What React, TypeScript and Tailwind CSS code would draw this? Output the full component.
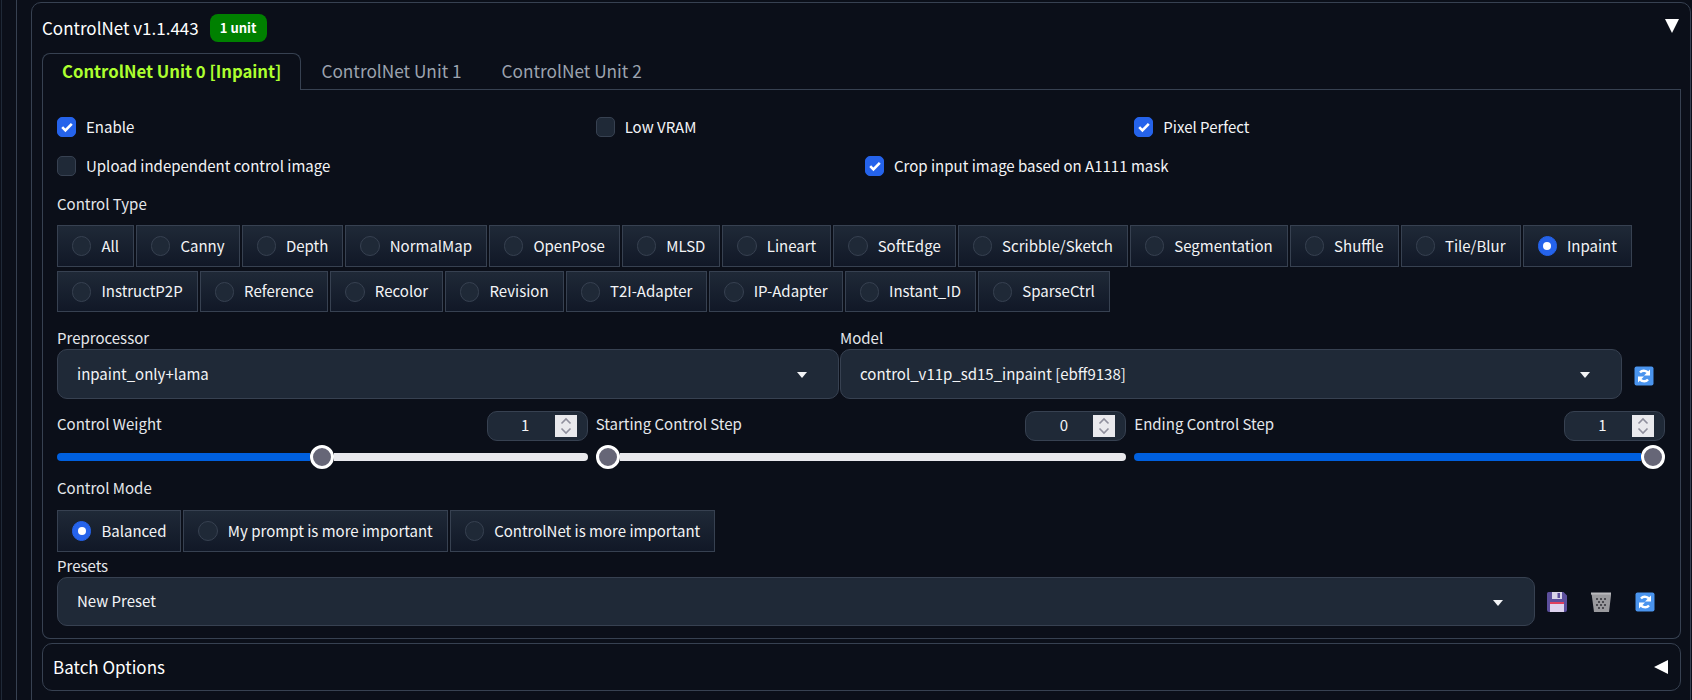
import React from 'react';

const FONT = 'font-["Noto_Sans_CJK_SC","Noto_Sans",sans-serif]';

const controlTypesTop = ['All', 'Canny', 'Depth', 'NormalMap', 'OpenPose', 'MLSD', 'Lineart', 'SoftEdge', 'Scribble/Sketch', 'Segmentation', 'Shuffle', 'Tile/Blur', 'Inpaint'];
const controlTypesBottom = ['InstructP2P', 'Reference', 'Recolor', 'Revision', 'T2I-Adapter', 'IP-Adapter', 'Instant_ID', 'SparseCtrl'];
const controlModes = ['Balanced', 'My prompt is more important', 'ControlNet is more important'];

const Checkbox = ({ label, checked = false }: { label: string; checked?: boolean }) => (
  <div className="flex h-5 items-center gap-[10px]">
    <span
      className={`flex h-5 w-[19px] items-center justify-center rounded-[5px] border ${
        checked ? 'border-[#2563eb] bg-[#2563eb]' : 'border-[#374151] bg-[#1f2937]'
      }`}
    >
      {checked && (
        <svg viewBox="0 0 16 16" className="h-4 w-4">
          <path d="M3.2 8.2l3.2 3.2 6.4-6.6" fill="none" stroke="#fff" strokeWidth="2.6" />
        </svg>
      )}
    </span>
    <span className="text-[15px] text-[#f3f4f6]">{label}</span>
  </div>
);

const RadioChip = ({ label, selected = false, height }: { label: string; selected?: boolean; height: string }) => (
  <div
    className={`flex ${height} items-center gap-[10px] border border-[#374151] bg-gradient-to-b from-[#1f2937] to-[#111827] px-[14px]`}
  >
    <span
      className={`flex h-5 w-[19.4px] items-center justify-center rounded-full border ${
        selected ? 'border-[#2563eb] bg-[#2563eb]' : 'border-[#374151] bg-[#1f2937]'
      }`}
    >
      {selected && <span className="h-2 w-2 rounded-full bg-white" />}
    </span>
    <span className="text-[15px] text-[#f3f4f6]">{label}</span>
  </div>
);

const Dropdown = ({ value, className }: { value: string; className: string }) => (
  <div
    className={`flex items-center justify-between rounded-[10px] border border-[#374151] bg-[#1f2937] pl-[19px] pr-[31px] text-[15px] text-[#f3f4f6] ${className}`}
  >
    <span>{value}</span>
    <svg viewBox="0 0 10 6" className="mt-[2px] h-[6px] w-[10px]">
      <path d="M0 0h10L5 6z" fill="#f3f4f6" />
    </svg>
  </div>
);

const Slider = ({ label, value, percent }: { label: string; value: string; percent: number }) => (
  <div className="flex flex-col">
    <div className="flex h-[29px] items-center justify-between">
      <span className="mt-[-2px] text-[15px] text-[#e5e7eb]">{label}</span>
      <div className="flex h-[30px] w-[101px] items-center rounded-[10px] border border-[#374151] bg-[#1f2937] pr-[10px]">
        <span className="flex-1 pl-[8px] text-center text-[15px] text-[#f3f4f6]">{value}</span>
        <span className="flex h-[22px] w-[22px] items-center justify-center bg-[#e9e9ed]">
          <svg viewBox="0 0 22 22" className="h-[22px] w-[22px]">
            <path d="M6.5 8.5L11 4l4.5 4.5M6.5 13.5L11 18l4.5-4.5" fill="none" stroke="#8f8f9d" strokeWidth="1.6" />
          </svg>
        </span>
      </div>
    </div>
    <div className="mt-[5px] flex h-6 items-center">
      <div className="h-2 rounded-l-full bg-[#0060df]" style={{ flexGrow: percent, flexBasis: 0 }} />
      <span className="h-6 w-6 flex-none rounded-full border-[3px] border-white bg-[#666677]" />
      <div className="h-2 rounded-r-full bg-[#e9e9ed]" style={{ flexGrow: 100 - percent, flexBasis: 0 }} />
    </div>
  </div>
);

const RefreshIcon = () => (
  <svg viewBox="0 0 20 20" className="h-5 w-5">
    <rect x="0.5" y="0.5" width="19" height="19" rx="2" fill="#4a94ee" />
    <path d="M14.6 8.2A5 5 0 0 0 6 6.6" fill="none" stroke="#fff" strokeWidth="2.4" />
    <path d="M16 3.6v6h-6z" fill="#fff" />
    <path d="M5.4 11.8a5 5 0 0 0 8.6 1.6" fill="none" stroke="#fff" strokeWidth="2.4" />
    <path d="M4 16.4v-6h6z" fill="#fff" />
  </svg>
);

const SaveIcon = () => (
  <svg viewBox="0 0 20 20" className="h-5 w-5">
    <path d="M1.5 0h15L20 3.5V18a2 2 0 0 1-2 2H2a2 2 0 0 1-2-2V1.5A1.5 1.5 0 0 1 1.5 0z" fill="#5c4f9c" />
    <rect x="5" y="0" width="10" height="7" fill="#d9d4e8" />
    <rect x="10.5" y="1" width="2.5" height="5" fill="#5c4f9c" />
    <rect x="3" y="10" width="14" height="10" fill="#ded3ee" />
    <rect x="3" y="10" width="14" height="2" fill="#e0405e" />
  </svg>
);

const TrashIcon = () => (
  <svg viewBox="0 0 20 20" className="h-5 w-5">
    <path d="M0 1h20v2.5l-2 16.5H3L0.8 3.5z" fill="#9a9a9e" />
    <rect x="0" y="0.5" width="20" height="2" fill="#b9b9bd" />
    <g fill="#4a4a50">
      <rect x="5" y="6" width="2" height="2" /><rect x="9" y="6" width="2" height="2" /><rect x="13" y="6" width="2" height="2" />
      <rect x="7" y="9" width="2" height="2" /><rect x="11" y="9" width="2" height="2" />
      <rect x="5" y="12" width="2" height="2" /><rect x="9" y="12" width="2" height="2" /><rect x="13" y="12" width="2" height="2" />
      <rect x="7" y="15" width="2" height="2" /><rect x="11" y="15" width="2" height="2" />
    </g>
  </svg>
);

export default function App() {
  return (
    <div className={`h-[700px] w-[1692px] overflow-hidden bg-[#0b0f19] ${FONT}`}>
      <div className="ml-px h-full border-l border-[#1f2937] pl-[14px]">
        <div className="h-full border-l border-[#374151] pl-[14px] pt-[2px] pr-[1px]">
          {/* ControlNet accordion */}
          <div className="h-[720px] rounded-[10px] border border-[#374151] pl-[10px] pr-[9px]">
            <div className="flex h-[50px] items-center justify-between">
              <div className="flex items-center gap-[11px]">
                <span className="text-[17px] text-white">ControlNet v1.1.443</span>
                <span className="flex h-[28px] w-[57px] items-center justify-center rounded-lg bg-[#008000] text-[13px] font-bold text-white">
                  1 unit
                </span>
              </div>
              <svg viewBox="0 0 14 14" className="mb-[4px] mr-[2px] h-[14px] w-[14px]">
                <path d="M0 0h14L7 14z" fill="#fff" />
              </svg>
            </div>

            {/* Tabs */}
            <div className="flex h-[37px] items-stretch">
              <div className="flex items-center rounded-t-lg border border-b-0 border-[#374151] bg-[#0b0f19] px-[19px] text-[16.7px] font-semibold text-[#adff2f]">
                ControlNet Unit 0 [Inpaint]
              </div>
              <div className="flex flex-1 items-stretch border-b border-[#374151] text-[17.25px] text-[#9ca3af]">
                <span className="flex items-center px-5">ControlNet Unit 1</span>
                <span className="flex items-center px-5">ControlNet Unit 2</span>
              </div>
            </div>

            <div className="h-[549px] rounded-b-lg border border-t-0 border-[#374151] pl-[14px] pr-[15px] pt-[27px]">
              <div className="grid grid-cols-3 gap-x-2">
                <Checkbox label="Enable" checked />
                <Checkbox label="Low VRAM" />
                <Checkbox label="Pixel Perfect" checked />
              </div>
              <div className="mt-[19px] grid grid-cols-2 gap-x-2">
                <Checkbox label="Upload independent control image" />
                <Checkbox label="Crop input image based on A1111 mask" checked />
              </div>

              <div className="mt-[17px] flex h-[22px] items-center text-[15px] text-[#e5e7eb]">Control Type</div>
              <div className="mt-[10px] flex gap-[2px]">
                {controlTypesTop.map((name) => (
                  <RadioChip key={name} label={name} selected={name === 'Inpaint'} height="h-[42px]" />
                ))}
              </div>
              <div className="mt-[4px] flex gap-[2px]">
                {controlTypesBottom.map((name) => (
                  <RadioChip key={name} label={name} height="h-[41px]" />
                ))}
              </div>

              {/* Preprocessor and model */}
              <div className="mt-[15px] flex">
                <div className="w-[783px] flex-none pr-px">
                  <div className="flex h-[22px] items-center text-[15px] text-[#e5e7eb]">Preprocessor</div>
                  <Dropdown value="inpaint_only+lama" className="h-[50px]" />
                </div>
                <div className="w-[782px] flex-none">
                  <div className="flex h-[22px] items-center text-[15px] text-[#e5e7eb]">Model</div>
                  <Dropdown value="control_v11p_sd15_inpaint [ebff9138]" className="h-[50px]" />
                </div>
                <div className="ml-[12px] mt-[39px]">
                  <RefreshIcon />
                </div>
              </div>

              <div className="mt-[12px] grid grid-cols-3 gap-x-2">
                <Slider label="Control Weight" value="1" percent={50} />
                <Slider label="Starting Control Step" value="0" percent={0} />
                <Slider label="Ending Control Step" value="1" percent={100} />
              </div>

              <div className="mt-[8px] flex h-[22px] items-center text-[15px] text-[#e5e7eb]">Control Mode</div>
              <div className="mt-[11px] flex gap-[2px]">
                {controlModes.map((name) => (
                  <RadioChip key={name} label={name} selected={name === 'Balanced'} height="h-[42px]" />
                ))}
              </div>

              {/* Presets */}
              <div className="mt-[3px] flex h-[22px] items-center text-[15px] text-[#e5e7eb]">Presets</div>
              <div className="flex items-center">
                <Dropdown value="New Preset" className="h-[49px] w-[1478px] flex-none" />
                <div className="ml-[11.5px] mt-[1px] flex gap-6">
                  <SaveIcon />
                  <TrashIcon />
                  <RefreshIcon />
                </div>
              </div>
            </div>

            {/* Batch options */}
            <div className="mt-[4px] flex h-[48px] items-center justify-between rounded-[10px] border border-[#374151] pl-[10px] pr-[12px]">
              <span className="text-[17px] text-white">Batch Options</span>
              <svg viewBox="0 0 14 14" className="h-[14px] w-[14px]">
                <path d="M14 0v14L0 7z" fill="#fff" />
              </svg>
            </div>
          </div>
        </div>
      </div>
    </div>
  );
}
